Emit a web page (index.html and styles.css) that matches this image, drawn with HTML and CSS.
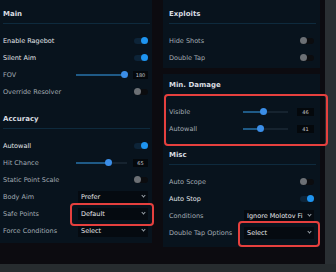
FILE: index.html
```html
<!DOCTYPE html>
<html lang="en">
  <head>
    <meta charset="UTF-8" />
    <title>Ragebot</title>
    <link rel="stylesheet" href="styles.css">
  </head>
  <body>
    <div class="app">
      <div class="main">
        <!-- Left column -->
        <div class="col col-left">
          <div class="card card-left">
            <div class="head">Main</div>
            <div class="rows">
              <div class="row on"><span>Enable Ragebot</span><span class="toggle active"></span></div>
              <div class="row on"><span>Silent Aim</span><span class="toggle active"></span></div>
              <div class="row">
                <span>FOV</span>
                <div class="slider">
                  <div class="track" style="--v: 96%"></div>
                  <span class="value">180</span>
                </div>
              </div>
              <div class="row"><span>Override Resolver</span><span class="toggle"></span></div>
            </div>

            <div class="head head-sub">Accuracy</div>
            <div class="rows">
              <div class="row on"><span>Autowall</span><span class="toggle active"></span></div>
              <div class="row">
                <span>Hit Chance</span>
                <div class="slider">
                  <div class="track" style="--v: 65%"></div>
                  <span class="value">65</span>
                </div>
              </div>
              <div class="row"><span>Static Point Scale</span><span class="toggle"></span></div>
              <div class="row"><span>Body Aim</span><div class="select"><span>Prefer</span><i class="chev"></i></div></div>
              <div class="row"><span>Safe Points</span><div class="select"><span>Default</span><i class="chev"></i></div></div>
              <div class="row"><span>Force Conditions</span><div class="select"><span>Select</span><i class="chev"></i></div></div>
            </div>
          </div>
        </div>

        <!-- Right column -->
        <div class="col col-right">
          <div class="card card-exploits">
            <div class="head">Exploits</div>
            <div class="rows">
              <div class="row"><span>Hide Shots</span><span class="toggle"></span></div>
              <div class="row"><span>Double Tap</span><span class="toggle"></span></div>
            </div>
          </div>

          <div class="card card-misc">
            <div class="head head-dmg">Min. Damage</div>
            <div class="rows">
              <div class="row">
                <span>Visible</span>
                <div class="slider slider-wide">
                  <div class="track" style="--v: 46%"></div>
                  <span class="value">46</span>
                </div>
              </div>
              <div class="row">
                <span>Autowall</span>
                <div class="slider slider-wide">
                  <div class="track" style="--v: 41%"></div>
                  <span class="value">41</span>
                </div>
              </div>
            </div>

            <div class="head head-sub2">Misc</div>
            <div class="rows">
              <div class="row"><span>Auto Scope</span><span class="toggle"></span></div>
              <div class="row on"><span>Auto Stop</span><span class="toggle active"></span></div>
              <div class="row"><span>Conditions</span><div class="select"><span>Ignore Molotov Fi</span><i class="chev"></i></div></div>
              <div class="row"><span>Double Tap Options</span><div class="select"><span>Select</span><i class="chev"></i></div></div>
            </div>
          </div>
        </div>
      </div>

      <div class="side"></div>

      <!-- Highlight boxes -->
      <div class="mark mark-safe"></div>
      <div class="mark mark-dmg"></div>
      <div class="mark mark-dt"></div>
    </div>
    <div class="bottom"></div>
  </body>
</html>
```

FILE: styles.css
```css
/* Global */
body {
  margin: 0;
  background-color: #0c0b10;
  font-family: "DejaVu Sans", sans-serif;
  font-size: 6.5px;
  color: #a2abb3;
  width: 336px;
  height: 272px;
  overflow: hidden;
}

.app {
  position: relative;
  display: flex;
  height: 264px;
}

.main {
  display: flex;
  gap: 11px;
  width: 325px;
}

.side {
  width: 11px;
  background-color: #2a2f33;
}

.bottom {
  height: 8px;
  background-color: #272c2f;
}

/* Cards */
.card {
  background-color: #08131d;
}

.col-left {
  width: 152px;
}

.col-right {
  width: 157px;
  display: flex;
  flex-direction: column;
  gap: 6px;
}

.card-left {
  height: 243px;
  padding: 0 4px 0 3px;
  box-sizing: border-box;
}

.card-exploits,
.card-misc {
  padding: 0 6px 0 6px;
}

.card-exploits {
  height: 68px;
  box-sizing: border-box;
}

.card-misc {
  height: 173px;
}

/* Section headings */
.head {
  height: 24px;
  display: flex;
  align-items: flex-end;
  padding-bottom: 5px;
  box-sizing: border-box;
  border-bottom: 1px solid #0e2a3d;
  margin-right: -2px;
  font-weight: bold;
  font-size: 7px;
  color: #d8dde2;
}

.head-sub {
  margin-top: 7px;
  height: 22px;
}

.head-dmg {
  height: 21px;
}

.head-sub2 {
  margin-top: 8px;
  height: 20px;
}

.rows {
  padding-top: 8px;
}

.row {
  height: 17px;
  display: flex;
  align-items: center;
  justify-content: space-between;
}

.row.on {
  color: #e2e6ea;
}

/* Toggle */
.toggle {
  position: relative;
  width: 14px;
  height: 6px;
  border-radius: 3px;
  background-color: #0b0c0f;
}

.toggle::after {
  content: "";
  position: absolute;
  top: -1px;
  left: 0;
  width: 7px;
  height: 7px;
  border-radius: 50%;
  background-color: #6c7075;
}

.toggle.active {
  background-color: #0d2438;
}

.toggle.active::after {
  left: auto;
  right: 0;
  background-color: #1e94f0;
}

/* Slider */
.slider {
  display: flex;
  align-items: center;
  gap: 6px;
}

.track {
  position: relative;
  width: 51px;
  height: 2px;
  background: linear-gradient(to right, #1f5a86 var(--v), #16232f var(--v));
}

.track::after {
  content: "";
  position: absolute;
  top: -3px;
  left: calc(var(--v) - 4px);
  width: 7px;
  height: 7px;
  border-radius: 50%;
  background-color: #3b8ee8;
}

.slider-wide {
  gap: 9px;
}

.slider-wide .track {
  width: 45px;
}

.value {
  width: 15px;
  height: 8px;
  line-height: 8px;
  background-color: #04080c;
  color: #c4cad0;
  font-size: 5px;
  text-align: center;
}

.slider-wide .value {
  width: 17px;
}

/* Dropdown */
.select {
  width: 70px;
  height: 12px;
  padding: 0 3px;
  box-sizing: border-box;
  display: flex;
  align-items: center;
  justify-content: space-between;
  gap: 1px;
  background-color: #050a10;
  color: #e6e9ec;
  white-space: nowrap;
}

.chev {
  flex: none;
  width: 2px;
  height: 2px;
  border-right: 1px solid #9aa2aa;
  border-bottom: 1px solid #9aa2aa;
  transform: rotate(45deg);
  margin-top: -2px;
}

/* Red highlight boxes */
.mark {
  position: absolute;
  border: 2.5px solid #e6403e;
  border-radius: 4px;
  box-sizing: border-box;
}

.mark-safe {
  left: 70px;
  top: 203px;
  width: 84px;
  height: 23px;
}

.mark-dmg {
  left: 164px;
  top: 94px;
  width: 164px;
  height: 52px;
}

.mark-dt {
  left: 238px;
  top: 221px;
  width: 82px;
  height: 26px;
}
```
